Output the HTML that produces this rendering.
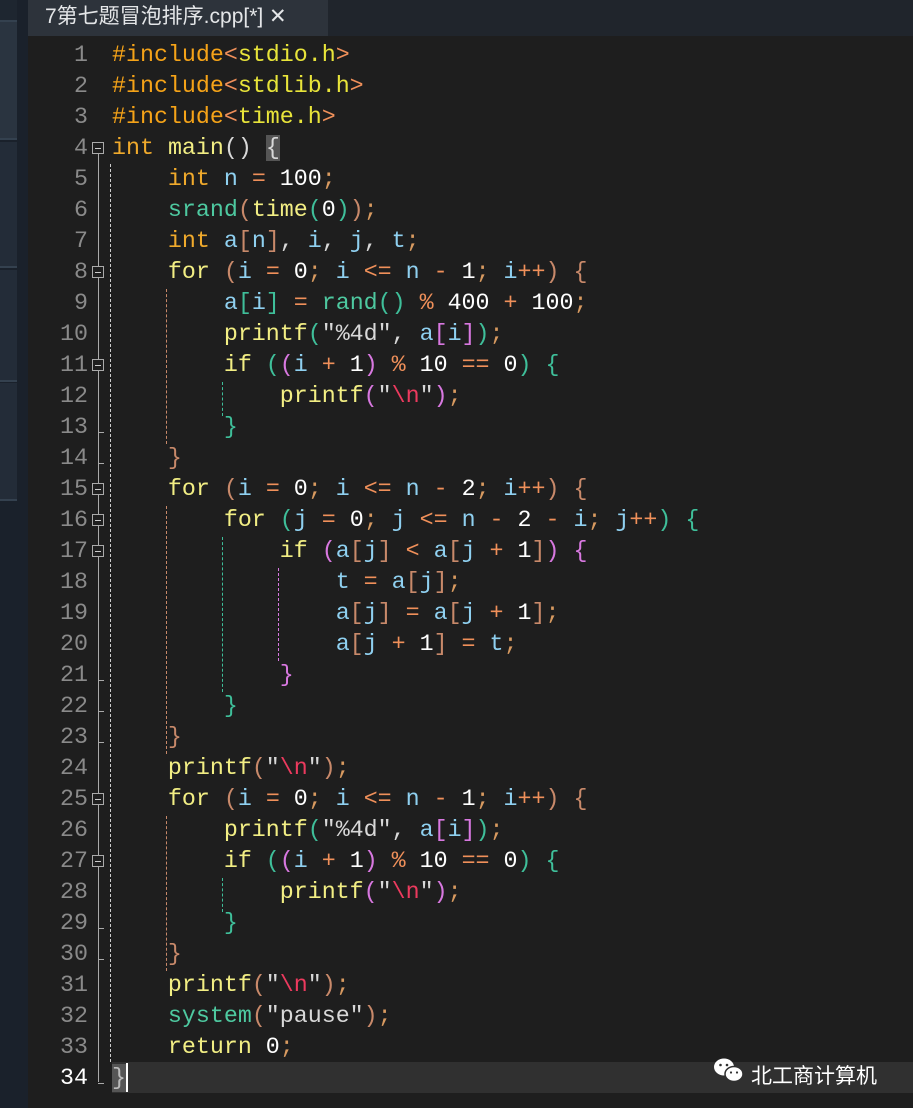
<!DOCTYPE html>
<html><head><meta charset="utf-8"><style>
body{margin:0;width:913px;height:1108px;background:#1e1e1e;overflow:hidden;position:relative;font-family:"Liberation Mono",monospace}
#side{position:absolute;left:0;top:0;width:28px;height:1108px;background:#1a212b}
.sec{position:absolute;left:0;width:17px;background:#232c38;border-bottom:2px solid #34414f}
#tabbar{position:absolute;left:28px;top:0;width:885px;height:36px;background:#20252c}
#tab{position:absolute;left:28px;top:0;width:300px;height:36px;background:#2d333b;color:#e4e6e8;font:21px "Liberation Sans","Noto Sans CJK SC",sans-serif;line-height:34px;padding-left:17px;box-sizing:border-box}
.ln{position:absolute;left:30px;width:58px;text-align:right;color:#8a8a8a;font-size:23.3px;line-height:31px;height:31px}
.code{position:absolute;left:112px;font-size:23.3px;line-height:31px;height:31px;white-space:pre;color:#d8d8d8}
.inc{color:#f5a318}.hdr{color:#e8e43a}.ty{color:#f0aa2c}.kw{color:#f2ee84}.tl{color:#4ec9a0}
.v{color:#8fd0f0}.o{color:#f0905a}.n{color:#fff}.p1{color:#c8896a}.p2{color:#3fbf9a}.p3{color:#d878e0}
.s{color:#d8d8d8}.e{color:#ec3a5e}.sc{color:#d89a60}
.fold{position:absolute;left:92px;width:12px;height:12px;border:1px solid #aaa;background:#1e1e1e;box-sizing:border-box}
.fold:after{content:"";position:absolute;left:2px;top:4.5px;width:6px;height:1px;background:#ccc}
.tick{position:absolute;left:98px;width:6px;height:1px;background:#aaa}
.g{position:absolute;width:0;border-left:1px dashed}
</style></head><body>
<div id="side">
<div class="sec" style="top:0;height:20px;background:#1e2630"></div>
<div class="sec" style="top:22px;height:116px;background:#2a3440"></div>
<div class="sec" style="top:142px;height:124px"></div>
<div class="sec" style="top:270px;height:110px"></div>
<div class="sec" style="top:383px;height:116px"></div>
</div>
<div id="tabbar"></div>
<div id="tab">7第七题冒泡排序.cpp[*] ✕</div>
<div style="position:absolute;left:112px;top:1062px;width:801px;height:31px;background:#303030"></div>
<div style="position:absolute;left:112px;top:1064px;width:14px;height:28px;background:#555"></div>
<div style="position:absolute;left:126px;top:1063px;width:2px;height:29px;background:#fff"></div>
<div style="position:absolute;left:98px;top:152px;width:1px;height:930px;background:#aaa"></div>
<div class="g" style="left:110px;top:164px;height:898px;border-color:#ccc"></div>
<div class="g" style="left:166px;top:289px;height:155px;border-color:#c8896a"></div>
<div class="g" style="left:166px;top:506px;height:248px;border-color:#c8896a"></div>
<div class="g" style="left:166px;top:816px;height:155px;border-color:#c8896a"></div>
<div class="g" style="left:222px;top:382px;height:34px;border-color:#3fbf9a"></div>
<div class="g" style="left:222px;top:537px;height:155px;border-color:#3fbf9a"></div>
<div class="g" style="left:222px;top:878px;height:34px;border-color:#3fbf9a"></div>
<div class="g" style="left:278px;top:568px;height:93px;border-color:#d878e0"></div>
<div id="lines"></div>
<script>
var L=[
'<span class="inc">#include</span><span class="o">&lt;</span><span class="hdr">stdio.h</span><span class="o">&gt;</span>',
'<span class="inc">#include</span><span class="o">&lt;</span><span class="hdr">stdlib.h</span><span class="o">&gt;</span>',
'<span class="inc">#include</span><span class="o">&lt;</span><span class="hdr">time.h</span><span class="o">&gt;</span>',
'<span class="ty">int</span> <span class="kw">main</span>() <span style="background:#555">{</span>',
'    <span class="ty">int</span> <span class="v">n</span> <span class="o">=</span> <span class="n">100</span><span class="sc">;</span>',
'    <span class="tl">srand</span><span class="p1">(</span><span class="kw">time</span><span class="p2">(</span><span class="n">0</span><span class="p2">)</span><span class="p1">)</span><span class="sc">;</span>',
'    <span class="ty">int</span> <span class="v">a</span><span class="p1">[</span><span class="v">n</span><span class="p1">]</span>, <span class="v">i</span>, <span class="v">j</span>, <span class="v">t</span><span class="sc">;</span>',
'    <span class="kw">for</span> <span class="p1">(</span><span class="v">i</span> <span class="o">=</span> <span class="n">0</span><span class="sc">;</span> <span class="v">i</span> <span class="o">&lt;=</span> <span class="v">n</span> <span class="o">-</span> <span class="n">1</span><span class="sc">;</span> <span class="v">i</span><span class="o">++</span><span class="p1">)</span> <span class="p1">{</span>',
'        <span class="v">a</span><span class="p2">[</span><span class="v">i</span><span class="p2">]</span> <span class="o">=</span> <span class="tl">rand</span><span class="p2">()</span> <span class="o">%</span> <span class="n">400</span> <span class="o">+</span> <span class="n">100</span><span class="sc">;</span>',
'        <span class="kw">printf</span><span class="p2">(</span><span class="s">"%4d"</span>, <span class="v">a</span><span class="p3">[</span><span class="v">i</span><span class="p3">]</span><span class="p2">)</span><span class="sc">;</span>',
'        <span class="kw">if</span> <span class="p2">(</span><span class="p3">(</span><span class="v">i</span> <span class="o">+</span> <span class="n">1</span><span class="p3">)</span> <span class="o">%</span> <span class="n">10</span> <span class="o">==</span> <span class="n">0</span><span class="p2">)</span> <span class="p2">{</span>',
'            <span class="kw">printf</span><span class="p3">(</span><span class="s">"</span><span class="e">\\n</span><span class="s">"</span><span class="p3">)</span><span class="sc">;</span>',
'        <span class="p2">}</span>',
'    <span class="p1">}</span>',
'    <span class="kw">for</span> <span class="p1">(</span><span class="v">i</span> <span class="o">=</span> <span class="n">0</span><span class="sc">;</span> <span class="v">i</span> <span class="o">&lt;=</span> <span class="v">n</span> <span class="o">-</span> <span class="n">2</span><span class="sc">;</span> <span class="v">i</span><span class="o">++</span><span class="p1">)</span> <span class="p1">{</span>',
'        <span class="kw">for</span> <span class="p2">(</span><span class="v">j</span> <span class="o">=</span> <span class="n">0</span><span class="sc">;</span> <span class="v">j</span> <span class="o">&lt;=</span> <span class="v">n</span> <span class="o">-</span> <span class="n">2</span> <span class="o">-</span> <span class="v">i</span><span class="sc">;</span> <span class="v">j</span><span class="o">++</span><span class="p2">)</span> <span class="p2">{</span>',
'            <span class="kw">if</span> <span class="p3">(</span><span class="v">a</span><span class="p1">[</span><span class="v">j</span><span class="p1">]</span> <span class="o">&lt;</span> <span class="v">a</span><span class="p1">[</span><span class="v">j</span> <span class="o">+</span> <span class="n">1</span><span class="p1">]</span><span class="p3">)</span> <span class="p3">{</span>',
'                <span class="v">t</span> <span class="o">=</span> <span class="v">a</span><span class="p1">[</span><span class="v">j</span><span class="p1">]</span><span class="sc">;</span>',
'                <span class="v">a</span><span class="p1">[</span><span class="v">j</span><span class="p1">]</span> <span class="o">=</span> <span class="v">a</span><span class="p1">[</span><span class="v">j</span> <span class="o">+</span> <span class="n">1</span><span class="p1">]</span><span class="sc">;</span>',
'                <span class="v">a</span><span class="p1">[</span><span class="v">j</span> <span class="o">+</span> <span class="n">1</span><span class="p1">]</span> <span class="o">=</span> <span class="v">t</span><span class="sc">;</span>',
'            <span class="p3">}</span>',
'        <span class="p2">}</span>',
'    <span class="p1">}</span>',
'    <span class="kw">printf</span><span class="p1">(</span><span class="s">"</span><span class="e">\\n</span><span class="s">"</span><span class="p1">)</span><span class="sc">;</span>',
'    <span class="kw">for</span> <span class="p1">(</span><span class="v">i</span> <span class="o">=</span> <span class="n">0</span><span class="sc">;</span> <span class="v">i</span> <span class="o">&lt;=</span> <span class="v">n</span> <span class="o">-</span> <span class="n">1</span><span class="sc">;</span> <span class="v">i</span><span class="o">++</span><span class="p1">)</span> <span class="p1">{</span>',
'        <span class="kw">printf</span><span class="p2">(</span><span class="s">"%4d"</span>, <span class="v">a</span><span class="p3">[</span><span class="v">i</span><span class="p3">]</span><span class="p2">)</span><span class="sc">;</span>',
'        <span class="kw">if</span> <span class="p2">(</span><span class="p3">(</span><span class="v">i</span> <span class="o">+</span> <span class="n">1</span><span class="p3">)</span> <span class="o">%</span> <span class="n">10</span> <span class="o">==</span> <span class="n">0</span><span class="p2">)</span> <span class="p2">{</span>',
'            <span class="kw">printf</span><span class="p3">(</span><span class="s">"</span><span class="e">\\n</span><span class="s">"</span><span class="p3">)</span><span class="sc">;</span>',
'        <span class="p2">}</span>',
'    <span class="p1">}</span>',
'    <span class="kw">printf</span><span class="p1">(</span><span class="s">"</span><span class="e">\\n</span><span class="s">"</span><span class="p1">)</span><span class="sc">;</span>',
'    <span class="tl">system</span><span class="p1">(</span><span class="s">"pause"</span><span class="p1">)</span><span class="sc">;</span>',
'    <span class="kw">return</span> <span class="n">0</span><span class="sc">;</span>',
'<span style="color:#bbb">}</span>'
];
var h='';
var folds=[4,8,11,15,16,17,25,27],ticks=[13,14,21,22,23,29,30,34];
for(var i=0;i<L.length;i++){var t=40+31*i;
h+='<div class="ln" style="top:'+t+'px'+(i==33?';color:#fff':'')+'">'+(i+1)+'</div><div class="code" style="top:'+t+'px">'+L[i]+'</div>';}
folds.forEach(function(n){h+='<div class="fold" style="top:'+(40+31*(n-1)+9)+'px"></div>';});
ticks.forEach(function(n){h+='<div class="tick" style="top:'+(40+31*(n-1)+20)+'px"></div>';});
document.getElementById('lines').innerHTML=h;
</script>
<div style="position:absolute;left:712px;top:1056px;width:36px;height:30px">
<svg width="36" height="30" viewBox="0 0 36 30"><ellipse cx="12" cy="11" rx="10" ry="8.5" fill="#fff"/><ellipse cx="22" cy="18" rx="9" ry="7.5" fill="#fff" stroke="#303030" stroke-width="1.5"/><circle cx="8.5" cy="9" r="1.3" fill="#303030"/><circle cx="15" cy="9" r="1.3" fill="#303030"/><circle cx="19" cy="16.5" r="1.1" fill="#303030"/><circle cx="25" cy="16.5" r="1.1" fill="#303030"/></svg></div>
<div style="position:absolute;left:751px;top:1062px;color:#fff;font:21px 'Liberation Sans','Noto Sans CJK SC',sans-serif;line-height:30px">北工商计算机</div>
</body></html>
